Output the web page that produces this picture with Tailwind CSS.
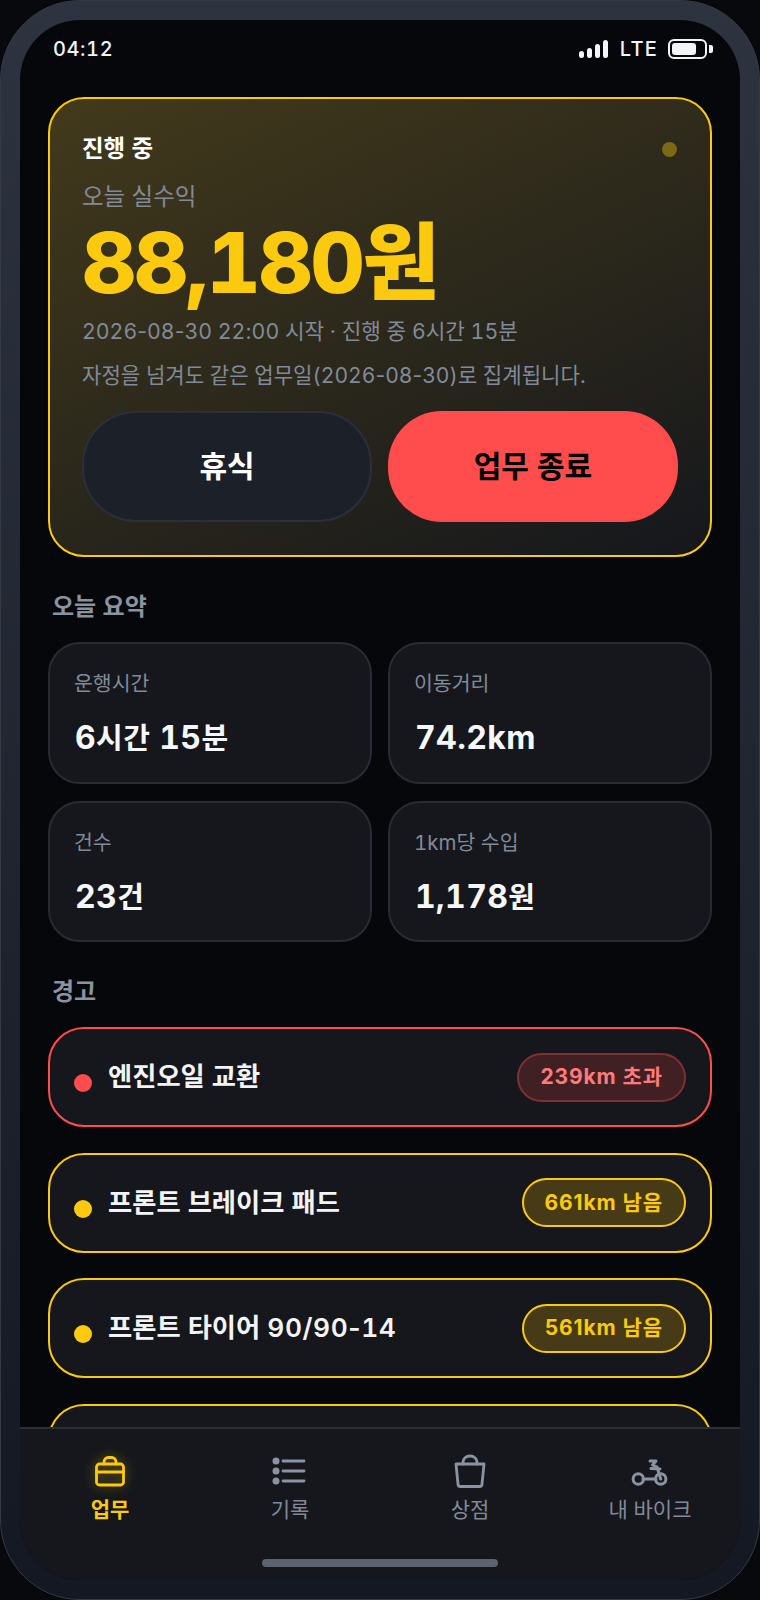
<!DOCTYPE html>
<html lang="ko">
<head>
<meta charset="utf-8">
<script src="https://cdn.jsdelivr.net/npm/@tailwindcss/browser@4"></script>
</head>
<body class="bg-[#08090d] font-['Inter','Noto_Sans_CJK_KR',sans-serif] tabular-nums">
<div class="w-[760px] h-[1600px] rounded-[80px] border border-[#343a46] bg-gradient-to-b from-[#2d333f] to-[#141822] p-[19px] overflow-hidden">
  <div class="relative w-[720px] h-[1560px] rounded-[60px] bg-[#06070a] overflow-hidden flex flex-col">
    <div class="h-[55px] shrink-0 flex items-center justify-between pl-[33px] pr-[27px] pt-[3px] text-[#f3f4f6]">
      <span class="text-[20px] font-medium tracking-[0.6px]">04:12</span>
      <div class="flex items-center">
        <div class="flex items-end gap-[3px] h-[18px]">
          <span class="w-[5px] h-[7px] rounded-full bg-[#f3f4f6]"></span>
          <span class="w-[5px] h-[10px] rounded-full bg-[#f3f4f6]"></span>
          <span class="w-[5px] h-[14px] rounded-full bg-[#f3f4f6]"></span>
          <span class="w-[5px] h-[18px] rounded-full bg-[#f3f4f6]"></span>
        </div>
        <span class="ml-[12px] text-[20px] font-medium tracking-[1.2px]">LTE</span>
        <div class="ml-[10px] flex items-center gap-[2px]">
          <div class="w-[39px] h-[20px] rounded-[6px] border-2 border-[#f3f4f6] p-[2px]"><div class="w-[24px] h-full rounded-[3px] bg-[#f3f4f6]"></div></div>
          <div class="w-[4px] h-[8px] rounded-r-[2px] bg-[#f3f4f6]"></div>
        </div>
      </div>
    </div>
    <main class="flex-1 min-h-0 overflow-hidden px-[28px] pt-[22px]">
      <section class="h-[460px] rounded-[36px] border-2 border-[#fbca0f] bg-[linear-gradient(155deg,#433a1b,#15171c)] px-[32px] pt-[34px]">
        <div class="flex items-center justify-between h-[32px]">
          <span class="text-[23.5px] leading-[32px] font-semibold text-white">진행 중</span>
          <span class="w-[15px] h-[15px] rounded-full bg-[#7d6816] mr-[1px]"></span>
        </div>
        <p class="mt-[16px] text-[23.5px] leading-[32px] text-[#828a99]">오늘 실수익</p>
        <p class="mt-[5px] text-[84px] leading-[90px] font-extrabold text-[#fbca0f]"><span class="tracking-[-2.2px]">88,180</span>원</p>
        <p class="mt-[8px] text-[21.3px] leading-[30px] text-[#828a99]">2026<span class="[font-variant-numeric:normal]">-</span>08<span class="[font-variant-numeric:normal]">-</span>30 22<span class="[font-variant-numeric:normal]">:</span>00 시작 · 진행 중 6시간 15분</p>
        <p class="mt-[15px] text-[21.1px] leading-[30px] text-[#828a99]">자정을 넘겨도 같은 업무일(2026<span class="[font-variant-numeric:normal]">-</span>08<span class="[font-variant-numeric:normal]">-</span>30)로 집계됩니다.</p>
        <div class="mt-[20px] grid grid-cols-2 gap-[16px] h-[111px]">
          <button class="rounded-[54px] border-2 border-[#2a2f3a] bg-[#1c2028] text-[30px] font-bold text-white">휴식</button>
          <button class="rounded-[54px] bg-[#ff4d4d] text-[30px] font-bold text-black">업무 종료</button>
        </div>
      </section>
      <h2 class="mt-[34px] text-[24px] leading-[32px] font-semibold text-[#8b93a1] pl-[4px]">오늘 요약</h2>
      <div class="mt-[19px] grid grid-cols-2 gap-x-[16px] gap-y-[17px]">
        <div class="h-[141.5px] rounded-[32px] border-2 border-[#272b34] bg-[#15171c] pl-[24px] pt-[25px]">
          <p class="text-[20.5px] leading-[30px] text-[#828a99]">운행시간</p>
          <p class="ml-[1px] mt-[19px] text-[32px] leading-[40px] font-bold tracking-[0.4px] text-[#f6f7f9]">6<span class="text-[29px]">시간</span> 15<span class="text-[29px]">분</span></p>
        </div>
        <div class="h-[141.5px] rounded-[32px] border-2 border-[#272b34] bg-[#15171c] pl-[24px] pt-[25px]">
          <p class="text-[20.5px] leading-[30px] text-[#828a99]">이동거리</p>
          <p class="ml-[1px] mt-[19px] text-[32px] leading-[40px] font-bold tracking-[0.4px] text-[#f6f7f9]">74.2km</p>
        </div>
        <div class="h-[141.5px] rounded-[32px] border-2 border-[#272b34] bg-[#15171c] pl-[24px] pt-[25px]">
          <p class="text-[20.5px] leading-[30px] text-[#828a99]">건수</p>
          <p class="ml-[1px] mt-[19px] text-[32px] leading-[40px] font-bold tracking-[0.4px] text-[#f6f7f9]">23<span class="text-[29px]">건</span></p>
        </div>
        <div class="h-[141.5px] rounded-[32px] border-2 border-[#272b34] bg-[#15171c] pl-[24px] pt-[25px]">
          <p class="text-[20.5px] leading-[30px] text-[#828a99]">1km당 수입</p>
          <p class="ml-[1px] mt-[19px] text-[32px] leading-[40px] font-bold tracking-[0.4px] text-[#f6f7f9]">1,178<span class="text-[29px]">원</span></p>
        </div>
      </div>
      <h2 class="mt-[34px] text-[24px] leading-[32px] font-semibold text-[#8b93a1] pl-[4px]">경고</h2>
      <div class="mt-[19px] flex flex-col gap-[25.5px]">
        <div class="h-[100px] rounded-[36px] border-2 border-[#ff4d4d] bg-[#15171c] flex items-center pl-[24px] pr-[24px]">
          <span class="w-[18px] h-[18px] rounded-full bg-[#ff4d4d] mt-[12px]"></span>
          <span class="ml-[16px] text-[26.3px] font-semibold text-[#f3f4f6] flex-1">엔진오일 교환</span>
          <span class="h-[49px] px-[21px] flex items-center rounded-full border-2 border-[#7e3033] bg-[#412023] text-[21px] font-bold tracking-[0.9px] [font-variant-numeric:normal] text-[#ff7a7a]">239km 초과</span>
        </div>
        <div class="h-[100px] rounded-[36px] border-2 border-[#fbca0f] bg-[#15171c] flex items-center pl-[24px] pr-[24px]">
          <span class="w-[18px] h-[18px] rounded-full bg-[#fbca0f] mt-[12px]"></span>
          <span class="ml-[16px] text-[26.3px] font-semibold text-[#f3f4f6] flex-1">프론트 브레이크 패드</span>
          <span class="h-[49px] px-[21px] flex items-center rounded-full border-2 border-[#fbca0f] bg-[#463b16] text-[21px] font-bold tracking-[0.9px] [font-variant-numeric:normal] text-[#fbca0f]">661km 남음</span>
        </div>
        <div class="h-[100px] rounded-[36px] border-2 border-[#fbca0f] bg-[#15171c] flex items-center pl-[24px] pr-[24px]">
          <span class="w-[18px] h-[18px] rounded-full bg-[#fbca0f] mt-[12px]"></span>
          <span class="ml-[16px] text-[26.3px] font-semibold text-[#f3f4f6] flex-1">프론트 타이어 <span class="tracking-[0.6px]">90/90<span class="[font-variant-numeric:normal]">-</span>14</span></span>
          <span class="h-[49px] px-[21px] flex items-center rounded-full border-2 border-[#fbca0f] bg-[#463b16] text-[21px] font-bold tracking-[0.9px] [font-variant-numeric:normal] text-[#fbca0f]">561km 남음</span>
        </div>
        <div class="h-[100px] rounded-[36px] border-2 border-[#fbca0f] bg-[#15171c]"></div>
      </div>
    </main>
    <nav class="h-[153px] shrink-0 border-t-2 border-[#2a2f3a] bg-[#15171c] relative">
      <div class="grid grid-cols-4 h-full">
        <div class="flex flex-col items-center pt-[25px]">
          <svg class="w-[36px] h-[36px] drop-shadow-[0_0_6px_rgba(251,202,15,0.45)]" viewBox="0 0 36 36" fill="none" stroke="#fbca0f" stroke-width="2.8" stroke-linecap="round" stroke-linejoin="round"><rect x="4.500" y="10" width="27" height="21" rx="3"/><path d="M4.500 18H31.500"/><path d="M12 10V8a4.500 4.500 0 0 1 4.500-4.500h3A4.500 4.500 0 0 1 24 8v2"/></svg>
          <span class="mt-[5px] text-[21px] leading-[30px] font-semibold text-[#fbca0f]">업무</span>
        </div>
        <div class="flex flex-col items-center pt-[25px]">
          <svg class="w-[36px] h-[36px]" viewBox="0 0 36 36" fill="#8b93a1"><circle cx="4" cy="7" r="3.500"/><circle cx="4" cy="17" r="3.500"/><circle cx="4" cy="27" r="3.500"/><g stroke="#8b93a1" stroke-width="2.800" stroke-linecap="round"><path d="M11 7H32"/><path d="M11 17H32"/><path d="M11 27H32"/></g></svg>
          <span class="mt-[5px] text-[21px] leading-[30px] text-[#828a99]">기록</span>
        </div>
        <div class="flex flex-col items-center pt-[25px]">
          <svg class="w-[36px] h-[36px]" viewBox="0 0 36 36" fill="none" stroke="#8b93a1" stroke-width="2.8" stroke-linecap="round" stroke-linejoin="round"><path d="M4 10H32L30 30a2.500 2.500 0 0 1-2.500 2.500H8.500A2.500 2.500 0 0 1 6 30Z"/><path d="M11 10V8a7 6 0 0 1 14 0v2"/></svg>
          <span class="mt-[5px] text-[21px] leading-[30px] text-[#828a99]">상점</span>
        </div>
        <div class="flex flex-col items-center pt-[25px]">
          <svg class="w-[38px] h-[36px]" viewBox="0 0 38 36" fill="none" stroke="#8b93a1" stroke-width="3" stroke-linecap="round" stroke-linejoin="round"><circle cx="7.300" cy="25" r="5.200"/><circle cx="29.700" cy="25" r="5.200"/><path d="M12 25H25"/><path d="M19 7H25L21.500 11L26 13L29.700 25"/><path d="M20 14.500L29 15"/></svg>
          <span class="mt-[5px] text-[21px] leading-[30px] text-[#828a99]">내 바이크</span>
        </div>
      </div>
      <div class="absolute left-[242px] bottom-[13px] w-[236px] h-[8px] rounded-full bg-[#5c636e]"></div>
    </nav>
  </div>
</div>
</body>
</html>
